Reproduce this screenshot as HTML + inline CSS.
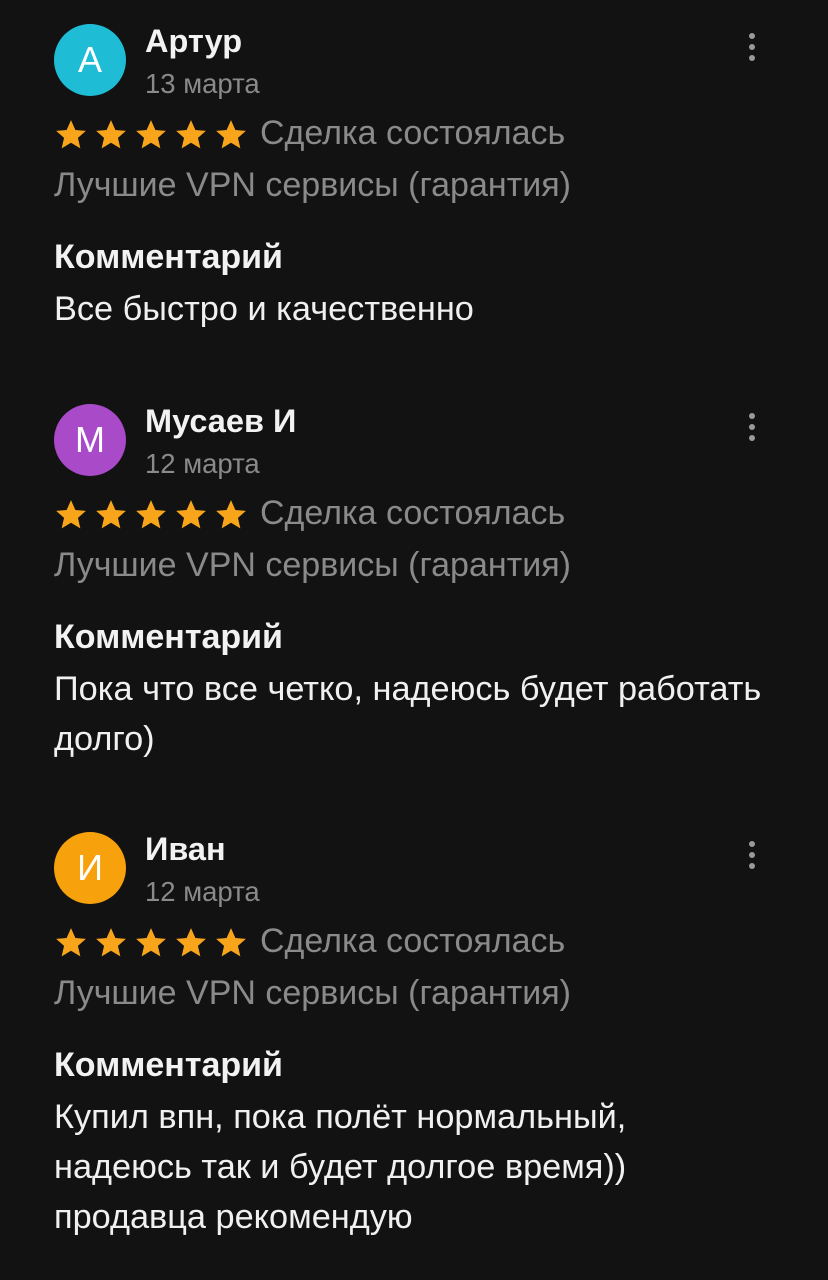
<!DOCTYPE html>
<html><head><meta charset="utf-8"><style>
body{margin:0;width:828px;height:1280px;background:#121212;font-family:"Liberation Sans",sans-serif;overflow:hidden;position:relative}
.b{position:absolute;left:0;width:828px}
.b div{line-height:1}
.av{position:absolute;left:54px;width:72px;height:72px;border-radius:50%;color:#fff;font-size:36px;text-align:center;line-height:72px!important}
.nm{position:absolute;left:145px;color:#f2f2f2;font-weight:bold;font-size:32.5px;white-space:nowrap}
.dt{position:absolute;left:145px;color:#8a8a8a;font-size:27.5px;white-space:nowrap}
.dots{position:absolute;left:749px;width:6px}
.dots i{display:block;width:6px;height:6px;border-radius:50%;background:#9a9a9a;margin-bottom:5px}
.st{position:absolute;left:52px;display:flex;gap:2px}
.sl{position:absolute;left:260px;color:#8a8a8a;font-size:34px;white-space:nowrap}
.cat{position:absolute;left:54px;color:#8a8a8a;font-size:34px;white-space:nowrap}
.kh{position:absolute;left:54px;color:#f2f2f2;font-weight:bold;font-size:34px}
.cm{position:absolute;left:54px;color:#f0f0f0;font-size:34.3px;line-height:50px!important;width:760px}
</style></head><body>
<svg width="0" height="0" style="position:absolute"><defs><symbol id="s" viewBox="0 0 24 24"><path d="M12 1.5l3.1 7 7.4.6-5.6 4.9 1.7 7.4L12 17.5 5.4 21.4l1.7-7.4L1.5 9.1l7.4-.6z" fill="#f8a51c"/></symbol></defs></svg>

<div class="b" style="top:0">
<div class="av" style="top:24px;background:#1fbcd6">A</div>
<div class="nm" style="top:25px">Артур</div>
<div class="dt" style="top:70px">13 марта</div>
<div class="dots" style="top:33px"><i></i><i></i><i></i></div>
<div class="st" style="top:118px"><svg width="38" height="34"><use href="#s"/></svg><svg width="38" height="34"><use href="#s"/></svg><svg width="38" height="34"><use href="#s"/></svg><svg width="38" height="34"><use href="#s"/></svg><svg width="38" height="34"><use href="#s"/></svg></div>
<div class="sl" style="top:116px">Сделка состоялась</div>
<div class="cat" style="top:168px">Лучшие VPN сервисы (гарантия)</div>
<div class="kh" style="top:240px">Комментарий</div>
<div class="cm" style="top:284px">Все быстро и качественно</div>
</div>

<div class="b" style="top:380px">
<div class="av" style="top:24px;background:#a94bc9">M</div>
<div class="nm" style="top:25px">Мусаев И</div>
<div class="dt" style="top:70px">12 марта</div>
<div class="dots" style="top:33px"><i></i><i></i><i></i></div>
<div class="st" style="top:118px"><svg width="38" height="34"><use href="#s"/></svg><svg width="38" height="34"><use href="#s"/></svg><svg width="38" height="34"><use href="#s"/></svg><svg width="38" height="34"><use href="#s"/></svg><svg width="38" height="34"><use href="#s"/></svg></div>
<div class="sl" style="top:116px">Сделка состоялась</div>
<div class="cat" style="top:168px">Лучшие VPN сервисы (гарантия)</div>
<div class="kh" style="top:240px">Комментарий</div>
<div class="cm" style="top:284px">Пока что все четко, надеюсь будет работать<br>долго)</div>
</div>

<div class="b" style="top:808px">
<div class="av" style="top:24px;background:#f7a10c">И</div>
<div class="nm" style="top:25px">Иван</div>
<div class="dt" style="top:70px">12 марта</div>
<div class="dots" style="top:33px"><i></i><i></i><i></i></div>
<div class="st" style="top:118px"><svg width="38" height="34"><use href="#s"/></svg><svg width="38" height="34"><use href="#s"/></svg><svg width="38" height="34"><use href="#s"/></svg><svg width="38" height="34"><use href="#s"/></svg><svg width="38" height="34"><use href="#s"/></svg></div>
<div class="sl" style="top:116px">Сделка состоялась</div>
<div class="cat" style="top:168px">Лучшие VPN сервисы (гарантия)</div>
<div class="kh" style="top:240px">Комментарий</div>
<div class="cm" style="top:284px">Купил впн, пока полёт нормальный,<br>надеюсь так и будет долгое время))<br>продавца рекомендую</div>
</div>
</body></html>
